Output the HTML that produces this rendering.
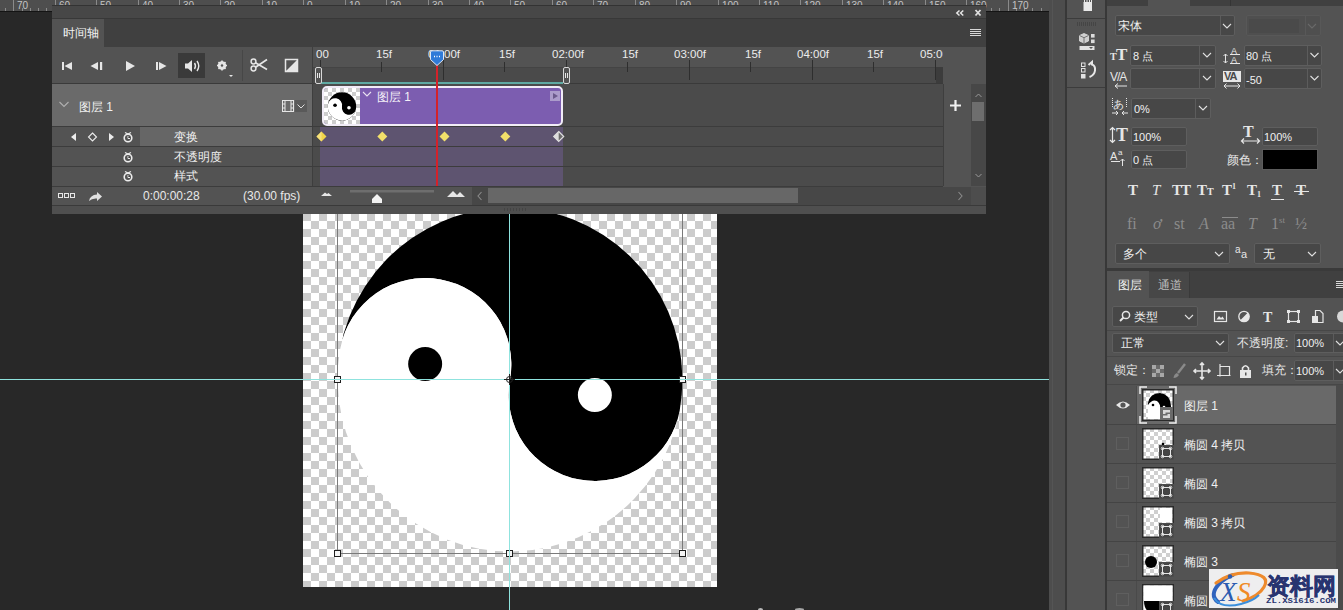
<!DOCTYPE html>
<html><head><meta charset="utf-8">
<style>
*{margin:0;padding:0;box-sizing:border-box;}
html,body{width:1343px;height:610px;overflow:hidden;background:#282828;font-family:"Liberation Sans",sans-serif;color:#e6e6e6;}
.a{position:absolute;}
.t{position:absolute;white-space:nowrap;line-height:1;}
.in{position:absolute;background:#474747;border:1px solid #5e5e5e;border-radius:2px;}
.dv{position:absolute;top:0;bottom:0;width:1px;background:#5c5c5c;}
.ar{position:absolute;}
.sf{font-family:"Liberation Serif",serif;}
</style></head><body>

<!-- ruler -->
<div class="a" id="ruler" style="left:0;top:0;width:1049px;height:11px;background:#4e4e4e;overflow:hidden;"><svg class="a" style="left:0;top:0" width="1049" height="11">
<path d="M5.5 8V11 M13.5 0V11 M22.5 8V11 M30.5 8V11 M38.5 8V11 M46.5 8V11 M55.5 0V11 M63.5 8V11 M71.5 8V11 M80.5 8V11 M88.5 8V11 M96.5 0V11 M104.5 8V11 M113.5 8V11 M121.5 8V11 M129.5 8V11 M138.5 0V11 M146.5 8V11 M154.5 8V11 M162.5 8V11 M171.5 8V11 M179.5 0V11 M187.5 8V11 M196.5 8V11 M204.5 8V11 M212.5 8V11 M220.5 0V11 M229.5 8V11 M237.5 8V11 M245.5 8V11 M254.5 8V11 M262.5 0V11 M270.5 8V11 M278.5 8V11 M287.5 8V11 M295.5 8V11 M303.5 0V11 M312.5 8V11 M320.5 8V11 M328.5 8V11 M336.5 8V11 M345.5 0V11 M353.5 8V11 M361.5 8V11 M370.5 8V11 M378.5 8V11 M386.5 0V11 M394.5 8V11 M403.5 8V11 M411.5 8V11 M419.5 8V11 M428.5 0V11 M436.5 8V11 M444.5 8V11 M452.5 8V11 M461.5 8V11 M469.5 0V11 M477.5 8V11 M486.5 8V11 M494.5 8V11 M502.5 8V11 M510.5 0V11 M519.5 8V11 M527.5 8V11 M535.5 8V11 M544.5 8V11 M552.5 0V11 M560.5 8V11 M568.5 8V11 M577.5 8V11 M585.5 8V11 M593.5 0V11 M602.5 8V11 M610.5 8V11 M618.5 8V11 M626.5 8V11 M635.5 0V11 M643.5 8V11 M651.5 8V11 M660.5 8V11 M668.5 8V11 M676.5 0V11 M684.5 8V11 M693.5 8V11 M701.5 8V11 M709.5 8V11 M718.5 0V11 M726.5 8V11 M734.5 8V11 M742.5 8V11 M751.5 8V11 M759.5 0V11 M767.5 8V11 M776.5 8V11 M784.5 8V11 M792.5 8V11 M800.5 0V11 M809.5 8V11 M817.5 8V11 M825.5 8V11 M834.5 8V11 M842.5 0V11 M850.5 8V11 M858.5 8V11 M867.5 8V11 M875.5 8V11 M883.5 0V11 M892.5 8V11 M900.5 8V11 M908.5 8V11 M916.5 8V11 M925.5 0V11 M933.5 8V11 M941.5 8V11 M950.5 8V11 M958.5 8V11 M966.5 0V11 M974.5 8V11 M983.5 8V11 M991.5 8V11 M999.5 8V11 M1008.5 0V11 M1016.5 8V11 M1024.5 8V11 M1032.5 8V11 M1041.5 8V11" stroke="#8a8a8a" stroke-width="1"/>
<text x="17" y="9" font-family="Liberation Sans" font-size="10" fill="#c4c4c4">70</text>
<text x="59" y="9" font-family="Liberation Sans" font-size="10" fill="#c4c4c4">60</text>
<text x="100" y="9" font-family="Liberation Sans" font-size="10" fill="#c4c4c4">50</text>
<text x="142" y="9" font-family="Liberation Sans" font-size="10" fill="#c4c4c4">40</text>
<text x="183" y="9" font-family="Liberation Sans" font-size="10" fill="#c4c4c4">30</text>
<text x="224" y="9" font-family="Liberation Sans" font-size="10" fill="#c4c4c4">20</text>
<text x="266" y="9" font-family="Liberation Sans" font-size="10" fill="#c4c4c4">10</text>
<text x="307" y="9" font-family="Liberation Sans" font-size="10" fill="#c4c4c4">0</text>
<text x="349" y="9" font-family="Liberation Sans" font-size="10" fill="#c4c4c4">10</text>
<text x="390" y="9" font-family="Liberation Sans" font-size="10" fill="#c4c4c4">20</text>
<text x="432" y="9" font-family="Liberation Sans" font-size="10" fill="#c4c4c4">30</text>
<text x="473" y="9" font-family="Liberation Sans" font-size="10" fill="#c4c4c4">40</text>
<text x="514" y="9" font-family="Liberation Sans" font-size="10" fill="#c4c4c4">50</text>
<text x="556" y="9" font-family="Liberation Sans" font-size="10" fill="#c4c4c4">60</text>
<text x="597" y="9" font-family="Liberation Sans" font-size="10" fill="#c4c4c4">70</text>
<text x="639" y="9" font-family="Liberation Sans" font-size="10" fill="#c4c4c4">80</text>
<text x="680" y="9" font-family="Liberation Sans" font-size="10" fill="#c4c4c4">90</text>
<text x="722" y="9" font-family="Liberation Sans" font-size="10" fill="#c4c4c4">100</text>
<text x="763" y="9" font-family="Liberation Sans" font-size="10" fill="#c4c4c4">110</text>
<text x="804" y="9" font-family="Liberation Sans" font-size="10" fill="#c4c4c4">120</text>
<text x="846" y="9" font-family="Liberation Sans" font-size="10" fill="#c4c4c4">130</text>
<text x="887" y="9" font-family="Liberation Sans" font-size="10" fill="#c4c4c4">140</text>
<text x="929" y="9" font-family="Liberation Sans" font-size="10" fill="#c4c4c4">150</text>
<text x="970" y="9" font-family="Liberation Sans" font-size="10" fill="#c4c4c4">160</text>
<text x="1012" y="9" font-family="Liberation Sans" font-size="10" fill="#c4c4c4">170</text>
</svg></div>
<div class="a" style="left:0;top:11px;width:1049px;height:1px;background:#141414;"></div>

<!-- document canvas -->
<svg class="a" style="left:303px;top:213px;" width="414" height="374" viewBox="303 213 414 374">
  <defs>
    <pattern id="chk" x="303" y="213" width="16" height="16" patternUnits="userSpaceOnUse">
      <rect x="0" y="0" width="16" height="16" fill="#fff"/>
      <rect x="0" y="0" width="8" height="8" fill="#cccccc"/>
      <rect x="8" y="8" width="8" height="8" fill="#cccccc"/>
    </pattern>
  </defs>
  <rect x="303" y="213" width="414" height="374" fill="url(#chk)"/>
  <path fill="#000" d="M340.3 348.55 A172.5 172.5 0 0 1 679.7 410.45 A86.25 86.25 0 0 1 510 379.5 A86.25 86.25 0 0 0 340.3 348.55 Z"/>
  <path id="yin" fill="#fff" d="M340.3 348.55 A172.5 172.5 0 0 0 679.7 410.45 A86.25 86.25 0 0 1 510 379.5 A86.25 86.25 0 0 0 340.3 348.55 Z"/>
  <circle cx="425.15" cy="364.03" r="17" fill="#000"/>
  <circle cx="594.85" cy="394.97" r="17" fill="#fff"/>
  <!-- transform box -->
  <g stroke="#7a7a7a" stroke-width="1" fill="none">
    <path d="M337.5 213 V553.5 H682.5 V213"/>
  </g>
  <g stroke="#1e1e1e" stroke-width="1" fill="#f4f4f4">
    <rect x="334.5" y="376.5" width="6" height="6"/>
    <rect x="679.5" y="376.5" width="6" height="6"/>
    <rect x="334.5" y="550.5" width="6" height="6"/>
    <rect x="506.5" y="550.5" width="6" height="6"/>
    <rect x="679.5" y="550.5" width="6" height="6"/>
  </g>
</svg>

<!-- guides -->
<div class="a" style="left:0;top:379px;width:1049px;height:1px;background:#8fe3de;"></div>
<div class="a" style="left:509px;top:213px;width:1px;height:397px;background:#8fe3de;"></div>
<svg class="a" style="left:503px;top:373px" width="13" height="13"><circle cx="6.5" cy="6.5" r="3" fill="none" stroke="#222" stroke-width="1"/><path d="M6.5 1V12M1 6.5H12" stroke="#222" stroke-width="1"/></svg>

<div class="a" style="left:758px;top:608px;width:5px;height:3px;border-radius:50%;background:#b8b8b8;"></div>
<div class="a" style="left:795px;top:608px;width:9px;height:3px;border-radius:50%;background:#a8a8a8;"></div>
<!-- timeline panel -->
<div class="a" style="left:52px;top:5px;width:934px;height:208px;background:#535353;border-top:1px solid #333;"></div>
<div class="a" style="left:52px;top:6px;width:934px;height:12px;background:#474747;"></div>
<div class="a" style="left:52px;top:18px;width:934px;height:29px;background:#404040;border-top:1px solid #383838;"></div>
<div class="a" style="left:52px;top:19px;width:52px;height:28px;background:#535353;"></div>
<div class="t" style="left:63px;top:27px;font-size:12px;color:#f2f2f2;">时间轴</div>
<!-- << x -->
<svg class="a" style="left:954px;top:8px" width="30" height="9">
 <path d="M5.5 2.5 L2.8 5 L5.5 7.5 M9.3 2.5 L6.6 5 L9.3 7.5" fill="none" stroke="#e6e6e6" stroke-width="1.5"/>
 <path d="M21.5 2 L26.5 7.5 M26.5 2 L21.5 7.5" stroke="#e0e0e0" stroke-width="1.8" fill="none"/>
</svg>
<svg class="a" style="left:970px;top:29px" width="11" height="9">
 <path d="M0 0.5H11M0 2.5H11M0 4.5H11M0 6.5H11" stroke="#d8d8d8" stroke-width="1" fill="none"/>
</svg>

<!-- controls row -->
<svg class="a" style="left:52px;top:47px" width="261" height="37">
 <rect x="126" y="6" width="27" height="25" fill="#3a3a3a"/>
 <rect x="10" y="15" width="2" height="8" fill="#e6e6e6"/><path d="M12.5 19 L20 15 V23 Z" fill="#e6e6e6"/>
 <path d="M38.5 19 L46 15 V23 Z" fill="#e6e6e6"/><rect x="48" y="15" width="2.2" height="8" fill="#e6e6e6"/>
 <path d="M74 14 L83 19 L74 24 Z" fill="#e6e6e6"/>
 <rect x="104" y="15" width="2" height="8" fill="#e6e6e6"/><path d="M107 15 L114.5 19 L107 23 Z" fill="#e6e6e6"/>
 <path d="M133 16.5 H136 L140 13 V25 L136 21.5 H133 Z" fill="#e6e6e6"/>
 <path d="M142.5 16 Q144.5 19 142.5 22 M145 14 Q148.5 19 145 24" stroke="#e6e6e6" stroke-width="1.4" fill="none"/>
 <circle cx="170" cy="18.5" r="3.2" fill="none" stroke="#e6e6e6" stroke-width="2.2"/>
 <path d="M170 13.5V23.5M165 18.5H175M166.5 15L173.5 22M173.5 15L166.5 22" stroke="#e6e6e6" stroke-width="1.6"/>
 <circle cx="170" cy="18.5" r="1.2" fill="#535353"/>
 <path d="M177 28 H181 L179 30 Z" fill="#e6e6e6"/>
 <rect x="190" y="3" width="1" height="31" fill="#474747"/>
 <circle cx="201.5" cy="14.5" r="2.4" fill="none" stroke="#e6e6e6" stroke-width="1.5"/>
 <circle cx="201.5" cy="21.5" r="2.4" fill="none" stroke="#e6e6e6" stroke-width="1.5"/>
 <path d="M203.5 15.8 L215 22.5 M203.5 20.2 L215 12.5" stroke="#e6e6e6" stroke-width="1.7"/>
 <rect x="233.5" y="12.5" width="12" height="12" fill="none" stroke="#e6e6e6" stroke-width="1.5"/>
 <path d="M245 13 L245 24 L234 24 Z" fill="#e6e6e6"/>
</svg>
<div class="a" style="left:52px;top:83px;width:891px;height:1px;background:#3a3a3a;"></div>

<!-- timeline ruler -->
<div class="a" style="left:313px;top:67px;width:630px;height:16px;background:#4a4a4a;border-top:1px solid #444;"></div>
<div class="a" style="left:936px;top:67px;width:7px;height:16px;background:#3c3c3c;"></div>
<div class="a" style="left:312px;top:47px;width:1px;height:159px;background:#3e3e3e;"></div>
<div class="a" style="left:321px;top:82px;width:242px;height:2px;background:#5fa9a2;"></div>
<svg class="a" style="left:313px;top:47px" width="630" height="37">
 <g stroke="#2e2e2e" stroke-width="1">
  <path d="M7.5 13V20 M68.5 15V25 M130.5 13V33 M191.5 15V25 M253.5 13V33 M314.5 15V25 M376.5 13V33 M437.5 15V25 M499.5 13V33 M560.5 15V25 M622.5 13V33"/>
 </g>
 <rect x="2.5" y="20.5" width="6" height="16" rx="1.5" fill="#535353" stroke="#d8d8d8" stroke-width="1"/>
 <path d="M4.5 26V31M6.5 26V31" stroke="#e8e8e8" stroke-width="1"/>
 <rect x="250.5" y="20.5" width="6" height="16" rx="1.5" fill="#535353" stroke="#d8d8d8" stroke-width="1"/>
 <path d="M252.5 26V31M254.5 26V31" stroke="#e8e8e8" stroke-width="1"/>
</svg>
<div class="t" style="left:316px;top:49px;font-size:11.5px;color:#ececec;">00</div>
<div class="t" style="left:376px;top:49px;font-size:11.5px;color:#ececec;">15f</div>
<div class="t" style="left:428px;top:49px;font-size:11.5px;color:#ececec;">01:00f</div>
<div class="t" style="left:499px;top:49px;font-size:11.5px;color:#ececec;">15f</div>
<div class="t" style="left:552px;top:49px;font-size:11.5px;color:#ececec;">02:00f</div>
<div class="t" style="left:622px;top:49px;font-size:11.5px;color:#ececec;">15f</div>
<div class="t" style="left:674px;top:49px;font-size:11.5px;color:#ececec;">03:00f</div>
<div class="t" style="left:745px;top:49px;font-size:11.5px;color:#ececec;">15f</div>
<div class="t" style="left:797px;top:49px;font-size:11.5px;color:#ececec;">04:00f</div>
<div class="t" style="left:867px;top:49px;font-size:11.5px;color:#ececec;">15f</div>
<div class="a" style="left:920px;top:47px;width:23px;height:20px;overflow:hidden;"><div class="t" style="left:0;top:2px;font-size:11.5px;color:#ececec;">05:00f</div></div>

<!-- left layer rows -->
<div class="a" style="left:52px;top:84px;width:260px;height:42px;background:#6a6a6a;"></div>
<svg class="a" style="left:58px;top:101px" width="12" height="8"><path d="M1.5 1 L6 5.5 L10.5 1" stroke="#b0b0b0" stroke-width="1.1" fill="none"/></svg>
<div class="t" style="left:79px;top:101px;font-size:12px;color:#f2f2f2;">图层 1</div>
<svg class="a" style="left:282px;top:99px" width="26" height="14">
 <rect x="0.5" y="1.5" width="11" height="11" fill="none" stroke="#e6e6e6" stroke-width="1"/>
 <path d="M3 2V12M9 2V12M0.5 5H3M0.5 9H3M9 5H11.5M9 9H11.5" stroke="#e6e6e6" stroke-width="1"/>
 <rect x="13" y="1" width="12" height="12" fill="#595959"/>
 <path d="M15.5 5.5L19 9L22.5 5.5" stroke="#dcdcdc" stroke-width="1" fill="none"/>
</svg>
<div class="a" style="left:52px;top:126px;width:891px;height:1px;background:#3c3c3c;"></div>
<div class="a" style="left:52px;top:127px;width:260px;height:19px;background:#535353;"></div>
<div class="a" style="left:140px;top:127px;width:172px;height:19px;background:#666666;"></div>
<div class="a" style="left:52px;top:146px;width:891px;height:1px;background:#3c3c3c;"></div>
<div class="a" style="left:52px;top:166px;width:891px;height:1px;background:#3c3c3c;"></div>
<div class="a" style="left:52px;top:186px;width:891px;height:1px;background:#3c3c3c;"></div>
<svg class="a" style="left:52px;top:127px" width="90" height="60">
 <path d="M19 10 L24 6 V14 Z" fill="#ececec"/>
 <path d="M40.5 6 L44.5 10 L40.5 14 L36.5 10 Z" fill="none" stroke="#ececec" stroke-width="1.1"/>
 <path d="M57 6 V14 L62 10 Z" fill="#ececec"/>
 <g fill="none" stroke="#ececec" stroke-width="1.6"><circle cx="76" cy="11" r="3.8"/><circle cx="76" cy="31" r="3.8"/><circle cx="76" cy="50" r="3.8"/></g>
 <path d="M73 5.5L76 7M79 5.5L76 7 M73 25.5L76 27M79 25.5L76 27 M73 44.5L76 46M79 44.5L76 46" stroke="#ececec" stroke-width="1.2"/>
 <path d="M76 9V11.5H78 M76 29V31.5H78 M76 48V50.5H78" stroke="#ececec" stroke-width="1"/>
</svg>
<div class="t" style="left:174px;top:131px;font-size:12px;color:#f0f0f0;">变换</div>
<div class="t" style="left:174px;top:151px;font-size:12px;color:#f0f0f0;">不透明度</div>
<div class="t" style="left:174px;top:170px;font-size:12px;color:#f0f0f0;">样式</div>

<!-- track area -->
<div class="a" style="left:313px;top:84px;width:630px;height:42px;background:#4b4b4b;"></div>
<div class="a" style="left:313px;top:127px;width:630px;height:19px;background:#4b4b4b;"></div>
<div class="a" style="left:313px;top:147px;width:630px;height:19px;background:#4b4b4b;"></div>
<div class="a" style="left:313px;top:167px;width:630px;height:19px;background:#4b4b4b;"></div>
<div class="a" style="left:320px;top:127px;width:243px;height:19px;background:#5e5470;"></div>
<div class="a" style="left:320px;top:147px;width:243px;height:19px;background:#5e5470;"></div>
<div class="a" style="left:320px;top:167px;width:243px;height:19px;background:#5e5470;"></div>
<!-- clip -->
<div class="a" style="left:322px;top:86px;width:241px;height:40px;background:#7c5db0;border:2px solid #f1ecf7;border-radius:5px;overflow:hidden;">
 <svg class="a" style="left:0;top:0" width="36" height="36" viewBox="0 0 36 36">
  <defs><pattern id="chk2" width="8" height="8" patternUnits="userSpaceOnUse"><rect width="8" height="8" fill="#fff"/><rect width="4" height="4" fill="#cdcdcd"/><rect x="4" y="4" width="4" height="4" fill="#cdcdcd"/></pattern></defs>
  <rect width="36" height="36" fill="url(#chk2)"/>
  <g transform="translate(18,18.5) scale(0.082) translate(-510,-379.5)">
   <circle cx="510" cy="379.5" r="172.5" fill="#000"/>
   <path fill="#fff" d="M340.3 348.55 A172.5 172.5 0 0 0 679.7 410.45 A86.25 86.25 0 0 1 510 379.5 A86.25 86.25 0 0 0 340.3 348.55 Z"/>
   <circle cx="425.15" cy="364.03" r="22" fill="#000"/><circle cx="594.85" cy="394.97" r="22" fill="#fff"/>
  </g>
 </svg>
 <svg class="a" style="left:38px;top:3px" width="10" height="6"><path d="M1 1L5 5L9 1" stroke="#e8e0f0" stroke-width="1.1" fill="none"/></svg>
 <div class="t" style="left:53px;top:3px;font-size:12px;color:#f4f0f8;">图层 1</div>
 <div class="a" style="left:226px;top:3px;width:10px;height:10px;background:#ab9bcb;"></div>
 <svg class="a" style="left:226px;top:3px" width="10" height="10"><path d="M3 2L8 5L3 8Z" fill="#6b5a8c"/></svg>
</div>
<!-- keyframes -->
<svg class="a" style="left:313px;top:127px" width="260" height="20">
 <g transform="translate(8.5,9.5)"><path d="M0 -5L5 0L0 5L-5 0Z" fill="#f2d54a"/><path d="M0 -5L-5 0L0 5Z" fill="#f7e27a"/></g>
 <path d="M69.3 4.5L74.3 9.5L69.3 14.5L64.3 9.5Z" fill="#f2e06a"/>
 <path d="M131.5 4.5L136.5 9.5L131.5 14.5L126.5 9.5Z" fill="#f2e06a"/>
 <path d="M192.3 4.5L197.3 9.5L192.3 14.5L187.3 9.5Z" fill="#f2e06a"/>
 <path d="M245.7 4.5L250.7 9.5L245.7 14.5L240.7 9.5Z" fill="#6a6a6a" stroke="#dedede" stroke-width="1.2"/>
 <path d="M245.7 4.5L240.7 9.5L245.7 14.5Z" fill="#dedede"/>
</svg>
<!-- playhead -->
<div class="a" style="left:436px;top:64px;width:2px;height:122px;background:#d4222a;"></div>
<svg class="a" style="left:429px;top:50px" width="16" height="17">
 <path d="M1.5 2 Q1.5 0.8 3 0.8 H13 Q14.5 0.8 14.5 2 V9.5 L8 15.5 L1.5 9.5 Z" fill="#2f7bd8" stroke="#dfe9f7" stroke-width="1"/>
 <path d="M5 6.5H6M7.5 6.5H8.5M10 6.5H11" stroke="#fff" stroke-width="1.6"/>
</svg>

<!-- bottom bar -->
<div class="a" style="left:52px;top:187px;width:261px;height:18px;background:#535353;"></div>
<svg class="a" style="left:52px;top:187px" width="60" height="18">
 <rect x="6.5" y="6.5" width="4" height="4" fill="none" stroke="#e8e8e8" stroke-width="1"/>
 <rect x="12.5" y="6.5" width="4" height="4" fill="none" stroke="#e8e8e8" stroke-width="1"/>
 <rect x="18.5" y="6.5" width="4" height="4" fill="none" stroke="#e8e8e8" stroke-width="1"/>
 <path d="M37 14 Q38 8 45 7.5 V5 L50 9.5 L45 14 V11.5 Q40 11 37 14Z" fill="#e0e0e0"/>
</svg>
<div class="t" style="left:143px;top:190px;font-size:12px;color:#e8e8e8;">0:00:00:28</div>
<div class="t" style="left:243px;top:190px;font-size:12px;color:#e8e8e8;">(30.00 fps)</div>
<div class="a" style="left:313px;top:187px;width:159px;height:18px;background:#535353;"></div>
<svg class="a" style="left:313px;top:187px" width="159" height="18">
 <path d="M8 9 L12 5.5 L14 7 L15.5 6 L19 9Z" fill="#e6e6e6"/>
 <rect x="37" y="3" width="84" height="2.5" fill="#6e6e6e"/>
 <path d="M59 16 V12 L64 7 L69 12 V16Z" fill="#f2f2f2"/>
 <path d="M134 10 L140 4 L144 8 L147 5 L152 10Z" fill="#e6e6e6"/>
</svg>
<div class="a" style="left:472px;top:187px;width:471px;height:18px;background:#474747;"></div>
<div class="a" style="left:488px;top:188px;width:310px;height:15px;background:#676767;"></div>
<svg class="a" style="left:475px;top:190px" width="10" height="12"><path d="M6.5 2L3 6L6.5 10" stroke="#8a8a8a" stroke-width="1.1" fill="none"/></svg>
<!-- right column -->
<div class="a" style="left:943px;top:84px;width:28px;height:102px;background:#535353;border-left:1px solid #3e3e3e;"></div>
<svg class="a" style="left:949px;top:99px" width="13" height="13"><path d="M6.5 1V12M1 6.5H12" stroke="#f0f0f0" stroke-width="2.2"/></svg>
<div class="a" style="left:971px;top:84px;width:15px;height:102px;background:#474747;"></div>
<div class="a" style="left:972px;top:102px;width:12px;height:19px;background:#6e6e6e;"></div>
<svg class="a" style="left:971px;top:90px" width="15" height="92">
 <path d="M4.5 7L7.5 4L10.5 7" stroke="#9a9a9a" stroke-width="1" fill="none"/>
 <path d="M4.5 84L7.5 87L10.5 84" stroke="#9a9a9a" stroke-width="1" fill="none"/>
</svg>
<div class="a" style="left:943px;top:187px;width:28px;height:18px;background:#474747;"></div>
<div class="a" style="left:971px;top:187px;width:15px;height:18px;background:#4d4d4d;"></div>
<svg class="a" style="left:955px;top:190px" width="10" height="12"><path d="M3.5 2L7 6L3.5 10" stroke="#8a8a8a" stroke-width="1.1" fill="none"/></svg>
<div class="a" style="left:52px;top:205px;width:934px;height:1px;background:#3a3a3a;"></div>
<div class="a" style="left:52px;top:206px;width:934px;height:8px;background:#4f4f4f;"></div>
<svg class="a" style="left:503px;top:207px" width="26" height="5"><path d="M1.5 1V4M4.5 1V4M7.5 1V4M10.5 1V4M13.5 1V4M16.5 1V4M19.5 1V4M22.5 1V4" stroke="#444" stroke-width="1"/></svg>

<!-- right side -->
<div class="a" style="left:1049px;top:0;width:294px;height:610px;background:#535353;"></div>
<div class="a" style="left:1049px;top:0;width:17px;height:610px;background:#4d4d4d;"></div><div class="a" style="left:1052px;top:0;width:1px;height:610px;background:#555;"></div>
<div class="a" style="left:1065px;top:0;width:2px;height:610px;background:#383838;"></div>
<div class="a" style="left:1105px;top:0;width:2px;height:610px;background:#383838;"></div>
<div class="a" style="left:1067px;top:18px;width:38px;height:1px;background:#3c3c3c;"></div>
<div class="a" style="left:1067px;top:87px;width:38px;height:1px;background:#3c3c3c;"></div>
<svg class="a" style="left:1067px;top:0" width="38" height="88">
 <rect x="16.5" y="2" width="8.5" height="9" fill="#e8e8e8"/>
 <path d="M17.5 0V3M20 0V3M22.5 0V3M24.5 0V3" stroke="#e8e8e8" stroke-width="1"/>
 <path d="M10.5 22V26M12.5 22V26M14.5 22V26M16.5 22V26M18.5 22V26M20.5 22V26M22.5 22V26M24.5 22V26M26.5 22V26M28.5 22V26" stroke="#454545" stroke-width="1"/>
 <path d="M17 33.5 L21.5 35.5 V41 L17 43 L12.5 41 V35.5 Z" fill="#cfcfcf" stroke="#e0e0e0" stroke-width="0.8"/>
 <path d="M12.5 35.5 L17 37.7 L21.5 35.5 M17 37.7V43" stroke="#6a6a6a" stroke-width="0.9" fill="none"/>
 <rect x="24" y="34" width="3.6" height="3.6" fill="#dcdcdc"/><rect x="24" y="39.5" width="3.6" height="3.6" fill="#dcdcdc"/>
 <rect x="12.5" y="46" width="15" height="4" fill="#e2e2e2"/><path d="M22 47H26L24 49Z" fill="#555"/>
 <rect x="14.5" y="63" width="3.5" height="3.5" fill="none" stroke="#e2e2e2" stroke-width="1"/>
 <rect x="14.5" y="68.5" width="3.5" height="3.5" fill="none" stroke="#e2e2e2" stroke-width="1"/>
 <rect x="14" y="74" width="4.5" height="4.5" fill="#e2e2e2"/>
 <path d="M21.5 65 L25 62 V64.5 Q28.5 65.5 28 70.5 Q27.5 75 22.5 77" stroke="#e8e8e8" stroke-width="2" fill="none"/>
</svg>

<!-- character panel top tabs (cropped) -->
<div class="a" style="left:1107px;top:0;width:236px;height:6px;background:#404040;"></div>
<div class="a" style="left:1148px;top:0;width:42px;height:6px;background:#535353;"></div>
<div class="a" style="left:1230px;top:0;width:1px;height:6px;background:#353535;"></div>

<!-- character panel -->
<div class="in" style="left:1115px;top:15px;width:120px;height:21px;"><div class="dv" style="left:104px"></div></div>
<div class="t" style="left:1118px;top:20px;font-size:12px;color:#f0f0f0;">宋体</div>
<div class="in" style="left:1246px;top:15px;width:75px;height:21px;background:#4f4f4f;border-color:#585858;"><div class="dv" style="left:58px;background:#585858"></div><div class="a" style="left:2px;top:3px;width:50px;height:14px;background:#4a4a4a;"></div></div>

<!-- size -->
<div class="t sf" style="left:1110px;top:52px;font-size:10px;font-weight:bold;color:#e6e6e6;">T</div>
<div class="t sf" style="left:1116px;top:46px;font-size:17px;font-weight:bold;color:#e6e6e6;">T</div>
<div class="in" style="left:1130px;top:45px;width:86px;height:21px;"><div class="dv" style="left:68px"></div></div>
<div class="t" style="left:1133px;top:51px;font-size:11px;color:#f0f0f0;">8 点</div>
<!-- leading -->
<svg class="a" style="left:1222px;top:45px" width="20" height="20">
 <text x="9" y="9" font-family="Liberation Sans" font-size="9" fill="#e6e6e6">A</text>
 <text x="9" y="18" font-family="Liberation Sans" font-size="9" fill="#e6e6e6">A</text>
 <path d="M8 9.5H18M8 18.5H18" stroke="#e6e6e6" stroke-width="1"/>
 <path d="M3.5 9V18M1.5 11L3.5 9L5.5 11M1.5 16L3.5 18L5.5 16" stroke="#e6e6e6" stroke-width="1" fill="none"/>
</svg>
<div class="in" style="left:1244px;top:45px;width:78px;height:21px;"><div class="dv" style="left:62px"></div></div>
<div class="t" style="left:1246px;top:51px;font-size:11px;color:#f0f0f0;">80 点</div>
<!-- kerning -->
<div class="t" style="left:1110px;top:71px;font-size:12px;color:#e6e6e6;letter-spacing:-1px;">V/A</div>
<svg class="a" style="left:1113px;top:83px" width="16" height="6"><path d="M2 3H14M5 0.5L2 3L5 5.5" stroke="#e6e6e6" stroke-width="1" fill="none"/></svg>
<div class="in" style="left:1130px;top:68px;width:86px;height:21px;"><div class="dv" style="left:68px"></div></div>
<!-- tracking -->
<div class="a" style="left:1223px;top:71px;width:18px;height:11px;background:#e6e6e6;"></div>
<div class="t" style="left:1224px;top:71px;font-size:11px;font-weight:bold;color:#4a4a4a;letter-spacing:-1px;">VA</div>
<svg class="a" style="left:1222px;top:83px" width="20" height="6"><path d="M2 3H18M4.5 0.5L2 3L4.5 5.5M15.5 0.5L18 3L15.5 5.5" stroke="#e6e6e6" stroke-width="1" fill="none"/></svg>
<div class="in" style="left:1244px;top:68px;width:78px;height:21px;"><div class="dv" style="left:62px"></div></div>
<div class="t" style="left:1246px;top:75px;font-size:11px;color:#f0f0f0;">-50</div>
<!-- tsume -->
<div class="t" style="left:1113px;top:99px;font-size:11px;color:#e6e6e6;">あ</div>
<svg class="a" style="left:1111px;top:97px" width="18" height="20">
 <path d="M1.5 1V11M15.5 1V11" stroke="#e6e6e6" stroke-width="1" stroke-dasharray="1 1"/>
 <path d="M1 16H7M5 14L7 16L5 18M17 16H11M13 14L11 16L13 18" stroke="#e6e6e6" stroke-width="1" fill="none"/>
</svg>
<div class="in" style="left:1131px;top:98px;width:80px;height:21px;"><div class="dv" style="left:63px"></div></div>
<div class="t" style="left:1134px;top:104px;font-size:11px;color:#f0f0f0;">0%</div>
<!-- vscale -->
<div class="t sf" style="left:1116px;top:126px;font-size:18px;font-weight:bold;color:#e6e6e6;">T</div>
<svg class="a" style="left:1109px;top:126px" width="8" height="18"><path d="M3.5 1.5V16.5M1 4L3.5 1.5L6 4M1 14L3.5 16.5L6 14" stroke="#e6e6e6" stroke-width="1.2" fill="none"/></svg>
<div class="in" style="left:1131px;top:127px;width:56px;height:19px;"></div>
<div class="t" style="left:1133px;top:132px;font-size:11px;color:#f0f0f0;">100%</div>
<!-- hscale -->
<div class="t sf" style="left:1243px;top:124px;font-size:16px;font-weight:bold;color:#e6e6e6;">T</div>
<svg class="a" style="left:1240px;top:137px" width="21" height="8"><path d="M1.5 4H19.5M4 1.5L1.5 4L4 6.5M17 1.5L19.5 4L17 6.5" stroke="#e6e6e6" stroke-width="1.2" fill="none"/></svg>
<div class="in" style="left:1262px;top:127px;width:56px;height:19px;"></div>
<div class="t" style="left:1264px;top:132px;font-size:11px;color:#f0f0f0;">100%</div>
<!-- baseline -->
<div class="t" style="left:1110px;top:151px;font-size:11px;color:#e6e6e6;">A</div>
<div class="t" style="left:1118px;top:149px;font-size:8px;color:#e6e6e6;">a</div>
<svg class="a" style="left:1110px;top:150px" width="18" height="18"><path d="M1 11.5H10" stroke="#e6e6e6" stroke-width="1"/><path d="M12.5 16V9M10.5 11L12.5 9L14.5 11" stroke="#e6e6e6" stroke-width="1" fill="none"/></svg>
<div class="in" style="left:1131px;top:150px;width:56px;height:19px;"></div>
<div class="t" style="left:1133px;top:155px;font-size:11px;color:#f0f0f0;">0 点</div>
<!-- color -->
<div class="t" style="left:1227px;top:154px;font-size:12px;color:#e6e6e6;">颜色：</div>
<div class="a" style="left:1262px;top:149px;width:56px;height:21px;background:#000;border:1px solid #5c5c5c;"></div>
<!-- style buttons -->
<div class="t sf" style="left:1128px;top:183px;font-size:15px;font-weight:bold;color:#e6e6e6;">T</div>
<div class="t sf" style="left:1152px;top:183px;font-size:15px;font-style:italic;color:#e6e6e6;">T</div>
<div class="t sf" style="left:1172px;top:183px;font-size:15px;font-weight:bold;color:#e6e6e6;letter-spacing:-1px;">TT</div>
<div class="t sf" style="left:1197px;top:183px;font-size:15px;font-weight:bold;color:#e6e6e6;">T<span style="font-size:10px">T</span></div>
<div class="t sf" style="left:1222px;top:183px;font-size:15px;font-weight:bold;color:#e6e6e6;">T<span style="font-size:8px;vertical-align:6px">1</span></div>
<div class="t sf" style="left:1247px;top:183px;font-size:15px;font-weight:bold;color:#e6e6e6;">T<span style="font-size:8px;vertical-align:-2px">1</span></div>
<div class="t sf" style="left:1272px;top:183px;font-size:15px;font-weight:bold;color:#e6e6e6;">T</div>
<div class="a" style="left:1271px;top:199px;width:13px;height:1px;background:#e6e6e6;"></div>
<div class="t sf" style="left:1296px;top:183px;font-size:15px;font-weight:bold;color:#e6e6e6;">T</div>
<div class="a" style="left:1294px;top:191px;width:15px;height:1px;background:#e6e6e6;"></div>
<!-- opentype dim -->
<div class="t sf" style="left:1127px;top:216px;font-size:16px;color:#8c8c8c;">fi</div>
<div class="t sf" style="left:1153px;top:216px;font-size:16px;font-style:italic;color:#8c8c8c;">ơ</div>
<div class="t sf" style="left:1174px;top:216px;font-size:16px;color:#8c8c8c;">st</div>
<div class="t sf" style="left:1199px;top:216px;font-size:16px;font-style:italic;color:#8c8c8c;">A</div>
<div class="t sf" style="left:1221px;top:216px;font-size:16px;color:#8c8c8c;">aa</div>
<div class="a" style="left:1222px;top:217px;width:16px;height:1px;background:#8c8c8c;"></div>
<div class="t sf" style="left:1248px;top:216px;font-size:16px;font-style:italic;color:#8c8c8c;">T</div>
<div class="t sf" style="left:1271px;top:216px;font-size:16px;color:#8c8c8c;">1<span style="font-size:9px;vertical-align:6px">st</span></div>
<div class="t sf" style="left:1295px;top:216px;font-size:16px;color:#8c8c8c;">½</div>
<!-- bottom dropdowns -->
<div class="in" style="left:1115px;top:243px;width:115px;height:21px;"></div>
<div class="t" style="left:1123px;top:248px;font-size:12px;color:#f0f0f0;">多个</div>
<svg class="a" style="left:1214px;top:251px" width="10" height="6"><path d="M1 1L5 5L9 1" stroke="#e0e0e0" stroke-width="1.1" fill="none"/></svg>
<div class="t" style="left:1235px;top:245px;font-size:10px;color:#e6e6e6;">a</div>
<div class="t" style="left:1241px;top:249px;font-size:11px;color:#e6e6e6;">a</div>
<div class="in" style="left:1254px;top:243px;width:67px;height:21px;"></div>
<div class="t" style="left:1263px;top:248px;font-size:12px;color:#f0f0f0;">无</div>
<svg class="a" style="left:1307px;top:251px" width="10" height="6"><path d="M1 1L5 5L9 1" stroke="#e0e0e0" stroke-width="1.1" fill="none"/></svg>
<div class="a" style="left:1107px;top:268px;width:236px;height:3px;background:#3a3a3a;"></div>
<svg class="a" style="left:1107px;top:0" width="236" height="270">
 <g stroke="#e0e0e0" stroke-width="1.1" fill="none">
  <path d="M116 24L120 28L124 24"/>
  <path d="M96 53L100 57L104 53"/><path d="M203.5 53L207.5 57L211.5 53"/>
  <path d="M96 76L100 80L104 76"/><path d="M203.5 76L207.5 80L211.5 76"/>
  <path d="M92 106L96 110L100 106"/>
 </g>
 <path d="M201 24L205 28L209 24" stroke="#6a6a6a" stroke-width="1.1" fill="none"/>
</svg>
<!-- layers panel -->
<div class="a" style="left:1107px;top:271px;width:236px;height:27px;background:#404040;"></div>
<div class="a" style="left:1107px;top:271px;width:42px;height:27px;background:#535353;"></div>
<div class="a" style="left:1149px;top:272px;width:41px;height:26px;background:#474747;border-right:1px solid #3a3a3a;"></div>
<div class="t" style="left:1118px;top:279px;font-size:12px;color:#f0f0f0;">图层</div>
<div class="t" style="left:1158px;top:279px;font-size:12px;color:#bdbdbd;">通道</div>
<svg class="a" style="left:1336px;top:281px" width="7" height="8"><path d="M0 0.5H7M0 2.5H7M0 4.5H7M0 6.5H7" stroke="#d8d8d8" stroke-width="1"/></svg>
<!-- filter row -->
<div class="in" style="left:1112px;top:306px;width:86px;height:21px;"></div>
<svg class="a" style="left:1118px;top:309px" width="14" height="14"><circle cx="8" cy="6" r="3.6" fill="none" stroke="#e6e6e6" stroke-width="1.5"/><path d="M5.5 8.5L2 12" stroke="#e6e6e6" stroke-width="2"/></svg>
<div class="t" style="left:1134px;top:311px;font-size:12px;color:#f0f0f0;">类型</div>
<svg class="a" style="left:1184px;top:314px" width="10" height="6"><path d="M1 1L5 5L9 1" stroke="#e0e0e0" stroke-width="1.1" fill="none"/></svg>
<svg class="a" style="left:1210px;top:306px" width="133" height="22">
 <rect x="4.5" y="5.5" width="12" height="10" fill="none" stroke="#e6e6e6" stroke-width="1.2"/>
 <path d="M6.5 13.5L9 10L11 12L12.5 10.5L14.5 13.5Z" fill="#e6e6e6"/>
 <circle cx="34" cy="10.5" r="5.2" fill="none" stroke="#e6e6e6" stroke-width="1.3"/>
 <path d="M30.3 14.2 A5.2 5.2 0 0 0 37.7 6.8Z" fill="#e6e6e6"/>
 <text x="53" y="16" font-family="Liberation Serif" font-weight="bold" font-size="14" fill="#e6e6e6">T</text>
 <rect x="78.5" y="5.5" width="10" height="10" fill="none" stroke="#e6e6e6" stroke-width="1.2"/>
 <g fill="#e6e6e6"><rect x="77" y="4" width="3" height="3"/><rect x="87" y="4" width="3" height="3"/><rect x="77" y="14" width="3" height="3"/><rect x="87" y="14" width="3" height="3"/></g>
 <path d="M105.5 4.5H110L113 7.5V16.5H105.5Z" fill="none" stroke="#e6e6e6" stroke-width="1.2"/>
 <rect x="102" y="10" width="6" height="7" fill="#e6e6e6"/>
 <circle cx="133" cy="10.5" r="6" fill="#d8d8d8"/>
</svg>
<div class="a" style="left:1107px;top:330px;width:236px;height:1px;background:#474747;"></div>
<!-- blend row -->
<div class="in" style="left:1112px;top:333px;width:117px;height:20px;"></div>
<div class="t" style="left:1121px;top:337px;font-size:12px;color:#f0f0f0;">正常</div>
<svg class="a" style="left:1215px;top:340px" width="10" height="6"><path d="M1 1L5 5L9 1" stroke="#e0e0e0" stroke-width="1.1" fill="none"/></svg>
<div class="t" style="left:1237px;top:337px;font-size:12px;color:#e6e6e6;">不透明度:</div>
<div class="in" style="left:1294px;top:333px;width:60px;height:20px;"><div class="dv" style="left:38px"></div></div>
<div class="t" style="left:1296px;top:338px;font-size:11px;color:#f0f0f0;">100%</div>
<svg class="a" style="left:1335px;top:340px" width="8" height="6"><path d="M1 1L5 5L9 1" stroke="#e0e0e0" stroke-width="1.1" fill="none"/></svg>
<div class="a" style="left:1107px;top:356px;width:236px;height:1px;background:#474747;"></div>
<!-- lock row -->
<div class="t" style="left:1114px;top:364px;font-size:12px;color:#e6e6e6;">锁定：</div>
<svg class="a" style="left:1150px;top:361px" width="105" height="20">
 <g fill="#a8a8a8"><rect x="2" y="4" width="12" height="12" fill="#6a6a6a"/><rect x="2" y="4" width="4" height="4"/><rect x="10" y="4" width="4" height="4"/><rect x="6" y="8" width="4" height="4"/><rect x="2" y="12" width="4" height="4"/><rect x="10" y="12" width="4" height="4"/></g>
 <path d="M35 3L28 12" stroke="#8a8a8a" stroke-width="2.4"/><path d="M27 12Q24 13 23.5 17Q27 17 29 14Z" fill="#8a8a8a"/>
 <path d="M52 2V18M44 10H60M50 4L52 2L54 4M50 16L52 18L54 16M46 8L44 10L46 12M58 8L60 10L58 12" stroke="#e6e6e6" stroke-width="1.6" fill="none"/>
 <path d="M70 5.5H79.5V15M67 14.5H80.5M70 3V15.5M79.5 3" stroke="#e6e6e6" stroke-width="1.2" fill="none"/>
 <rect x="90" y="9" width="11" height="8" fill="#e6e6e6"/><path d="M92.5 9.5V7Q95.5 2.5 98.5 7V9.5" stroke="#e6e6e6" stroke-width="1.6" fill="none"/><rect x="95" y="11.5" width="1.5" height="3" fill="#535353"/>
</svg>
<div class="t" style="left:1262px;top:364px;font-size:12px;color:#e6e6e6;">填充：</div>
<div class="in" style="left:1294px;top:360px;width:60px;height:21px;"><div class="dv" style="left:38px"></div></div>
<div class="t" style="left:1296px;top:366px;font-size:11px;color:#f0f0f0;">100%</div>
<svg class="a" style="left:1335px;top:368px" width="8" height="6"><path d="M1 1L5 5L9 1" stroke="#e0e0e0" stroke-width="1.1" fill="none"/></svg>
<div class="a" style="left:1107px;top:384px;width:236px;height:1px;background:#474747;"></div>
<!-- layer list -->
<div class="a" style="left:1336px;top:385px;width:7px;height:225px;background:#4b4b4b;"></div>
<div class="a" style="left:1137px;top:386px;width:199px;height:38px;background:#696969;"></div>
<svg width="0" height="0" style="position:absolute"><defs>
 <pattern id="chk3" x="1143" y="0" width="8" height="8" patternUnits="userSpaceOnUse"><rect width="8" height="8" fill="#fff"/><rect width="4" height="4" fill="#cfcfcf"/><rect x="4" y="4" width="4" height="4" fill="#cfcfcf"/></pattern>
</defs></svg>

<div class="a" style="left:1136px;top:386px;width:1px;height:38px;background:#4a4a4a;"></div>
<svg class="a" style="left:1115px;top:400px" width="16" height="10"><path d="M1 5Q8 -2 15 5Q8 12 1 5Z" fill="#e8e8e8"/><circle cx="8" cy="5" r="2.6" fill="#555"/></svg>
<svg class="a" style="left:1142px;top:389px" width="32" height="32" viewBox="0 0 32 32"><defs><pattern id="pc0" width="8" height="8" patternUnits="userSpaceOnUse"><rect width="8" height="8" fill="#fff"/><rect width="4" height="4" fill="#cfcfcf"/><rect x="4" y="4" width="4" height="4" fill="#cfcfcf"/></pattern></defs><rect x="0" y="0" width="32" height="32" fill="#2a2a2a"/><rect x="1.5" y="1.5" width="29" height="29" fill="url(#pc0)"/><path d="M6 30 V14 Q8 4 18 4 Q28 5 29 17 L29 21 L18 21 L18 30Z" fill="#000"/><path d="M6 30 V16 Q10 10 15 12 Q19 15 18 21 V30Z" fill="#fff"/><circle cx="11" cy="16" r="1.3" fill="#000"/><circle cx="22" cy="18" r="1.3" fill="#fff"/><rect x="18" y="18" width="13" height="13" fill="#6a6a6a"/><path d="M21 21H28V23.5H23.5V25H28V29H21V26.5H25.5V25H21Z" fill="#d8d8d8"/></svg>
<svg class="a" style="left:1139px;top:386px" width="38" height="38"><path d="M1 8V1H8M30 1H37V8M37 30V37H30M8 37H1V30" stroke="#f0f0f0" stroke-width="1.5" fill="none"/></svg>
<div class="t" style="left:1184px;top:400px;font-size:12px;color:#f0f0f0;">图层 1</div>
<div class="a" style="left:1107px;top:424px;width:229px;height:1px;background:#444;"></div>
<div class="a" style="left:1136px;top:425px;width:1px;height:38px;background:#4a4a4a;"></div>
<div class="a" style="left:1116px;top:437px;width:13px;height:13px;border:1px solid #5f5f5f;"></div>
<svg class="a" style="left:1142px;top:428px" width="32" height="32" viewBox="0 0 32 32"><defs><pattern id="pc1" width="8" height="8" patternUnits="userSpaceOnUse"><rect width="8" height="8" fill="#fff"/><rect width="4" height="4" fill="#cfcfcf"/><rect x="4" y="4" width="4" height="4" fill="#cfcfcf"/></pattern></defs><rect x="0" y="0" width="32" height="32" fill="#2a2a2a"/><rect x="1.5" y="1.5" width="29" height="29" fill="url(#pc1)"/><circle cx="21" cy="16" r="1.3" fill="#000"/><rect x="17" y="17" width="15" height="15" fill="#535353"/><rect x="17.5" y="17.5" width="14" height="14" fill="#2a2a2a" opacity="0.35"/><rect x="20.5" y="20.5" width="8" height="8" fill="none" stroke="#e6e6e6" stroke-width="1"/><g fill="none" stroke="#e6e6e6" stroke-width="1"><circle cx="20.5" cy="20.5" r="1.3"/><circle cx="28.5" cy="20.5" r="1.3"/><circle cx="20.5" cy="28.5" r="1.3"/><circle cx="28.5" cy="28.5" r="1.3"/></g></svg>
<div class="t" style="left:1184px;top:439px;font-size:12px;color:#f0f0f0;">椭圆 4 拷贝</div>
<div class="a" style="left:1107px;top:463px;width:229px;height:1px;background:#444;"></div>
<div class="a" style="left:1136px;top:464px;width:1px;height:38px;background:#4a4a4a;"></div>
<div class="a" style="left:1116px;top:476px;width:13px;height:13px;border:1px solid #5f5f5f;"></div>
<svg class="a" style="left:1142px;top:467px" width="32" height="32" viewBox="0 0 32 32"><defs><pattern id="pc2" width="8" height="8" patternUnits="userSpaceOnUse"><rect width="8" height="8" fill="#fff"/><rect width="4" height="4" fill="#cfcfcf"/><rect x="4" y="4" width="4" height="4" fill="#cfcfcf"/></pattern></defs><rect x="0" y="0" width="32" height="32" fill="#2a2a2a"/><rect x="1.5" y="1.5" width="29" height="29" fill="url(#pc2)"/><rect x="17" y="17" width="15" height="15" fill="#535353"/><rect x="17.5" y="17.5" width="14" height="14" fill="#2a2a2a" opacity="0.35"/><rect x="20.5" y="20.5" width="8" height="8" fill="none" stroke="#e6e6e6" stroke-width="1"/><g fill="none" stroke="#e6e6e6" stroke-width="1"><circle cx="20.5" cy="20.5" r="1.3"/><circle cx="28.5" cy="20.5" r="1.3"/><circle cx="20.5" cy="28.5" r="1.3"/><circle cx="28.5" cy="28.5" r="1.3"/></g></svg>
<div class="t" style="left:1184px;top:478px;font-size:12px;color:#f0f0f0;">椭圆 4</div>
<div class="a" style="left:1107px;top:502px;width:229px;height:1px;background:#444;"></div>
<div class="a" style="left:1136px;top:503px;width:1px;height:38px;background:#4a4a4a;"></div>
<div class="a" style="left:1116px;top:515px;width:13px;height:13px;border:1px solid #5f5f5f;"></div>
<svg class="a" style="left:1142px;top:506px" width="32" height="32" viewBox="0 0 32 32"><defs><pattern id="pc3" width="8" height="8" patternUnits="userSpaceOnUse"><rect width="8" height="8" fill="#fff"/><rect width="4" height="4" fill="#cfcfcf"/><rect x="4" y="4" width="4" height="4" fill="#cfcfcf"/></pattern></defs><rect x="0" y="0" width="32" height="32" fill="#2a2a2a"/><rect x="1.5" y="1.5" width="29" height="29" fill="url(#pc3)"/><rect x="18" y="2" width="12" height="14" fill="#fff"/><rect x="17" y="17" width="15" height="15" fill="#535353"/><rect x="17.5" y="17.5" width="14" height="14" fill="#2a2a2a" opacity="0.35"/><rect x="20.5" y="20.5" width="8" height="8" fill="none" stroke="#e6e6e6" stroke-width="1"/><g fill="none" stroke="#e6e6e6" stroke-width="1"><circle cx="20.5" cy="20.5" r="1.3"/><circle cx="28.5" cy="20.5" r="1.3"/><circle cx="20.5" cy="28.5" r="1.3"/><circle cx="28.5" cy="28.5" r="1.3"/></g></svg>
<div class="t" style="left:1184px;top:517px;font-size:12px;color:#f0f0f0;">椭圆 3 拷贝</div>
<div class="a" style="left:1107px;top:541px;width:229px;height:1px;background:#444;"></div>
<div class="a" style="left:1136px;top:542px;width:1px;height:38px;background:#4a4a4a;"></div>
<div class="a" style="left:1116px;top:554px;width:13px;height:13px;border:1px solid #5f5f5f;"></div>
<svg class="a" style="left:1142px;top:545px" width="32" height="32" viewBox="0 0 32 32"><defs><pattern id="pc4" width="8" height="8" patternUnits="userSpaceOnUse"><rect width="8" height="8" fill="#fff"/><rect width="4" height="4" fill="#cfcfcf"/><rect x="4" y="4" width="4" height="4" fill="#cfcfcf"/></pattern></defs><rect x="0" y="0" width="32" height="32" fill="#2a2a2a"/><rect x="1.5" y="1.5" width="29" height="29" fill="url(#pc4)"/><circle cx="9" cy="17" r="6" fill="#000"/><rect x="17" y="17" width="15" height="15" fill="#535353"/><rect x="17.5" y="17.5" width="14" height="14" fill="#2a2a2a" opacity="0.35"/><rect x="20.5" y="20.5" width="8" height="8" fill="none" stroke="#e6e6e6" stroke-width="1"/><g fill="none" stroke="#e6e6e6" stroke-width="1"><circle cx="20.5" cy="20.5" r="1.3"/><circle cx="28.5" cy="20.5" r="1.3"/><circle cx="20.5" cy="28.5" r="1.3"/><circle cx="28.5" cy="28.5" r="1.3"/></g></svg>
<div class="t" style="left:1184px;top:556px;font-size:12px;color:#f0f0f0;">椭圆 3</div>
<div class="a" style="left:1107px;top:580px;width:229px;height:1px;background:#444;"></div>
<div class="a" style="left:1136px;top:581px;width:1px;height:38px;background:#4a4a4a;"></div>
<div class="a" style="left:1116px;top:593px;width:13px;height:13px;border:1px solid #5f5f5f;"></div>
<svg class="a" style="left:1142px;top:584px" width="32" height="32" viewBox="0 0 32 32"><defs><pattern id="pc5" width="8" height="8" patternUnits="userSpaceOnUse"><rect width="8" height="8" fill="#fff"/><rect width="4" height="4" fill="#cfcfcf"/><rect x="4" y="4" width="4" height="4" fill="#cfcfcf"/></pattern></defs><rect x="0" y="0" width="32" height="32" fill="#2a2a2a"/><rect x="1.5" y="1.5" width="29" height="29" fill="url(#pc5)"/><rect x="1.5" y="1.5" width="29" height="29" fill="#fff"/><path d="M2 17 H30 Q30 30 16 31 Q2 30 2 17Z" fill="#000"/><rect x="17" y="17" width="15" height="15" fill="#535353"/><rect x="17.5" y="17.5" width="14" height="14" fill="#2a2a2a" opacity="0.35"/><rect x="20.5" y="20.5" width="8" height="8" fill="none" stroke="#e6e6e6" stroke-width="1"/><g fill="none" stroke="#e6e6e6" stroke-width="1"><circle cx="20.5" cy="20.5" r="1.3"/><circle cx="28.5" cy="20.5" r="1.3"/><circle cx="20.5" cy="28.5" r="1.3"/><circle cx="28.5" cy="28.5" r="1.3"/></g></svg>
<div class="t" style="left:1184px;top:595px;font-size:12px;color:#f0f0f0;">椭圆</div>
<!-- watermark -->
<div class="a" style="left:1209px;top:569px;width:129px;height:39px;background:#eeeeef;"></div>
<svg class="a" style="left:1209px;top:569px" width="129" height="39">
 <path d="M9 33 Q0 26 10 15 Q16 9 24 6" stroke="#2f62bd" stroke-width="4" fill="none" stroke-linecap="round"/>
 <path d="M7 14 Q22 3 40 4 Q62 6 55 18 Q50 27 34 32" stroke="#ee8a2c" stroke-width="3.2" fill="none" stroke-linecap="round"/>
 <path d="M5 29 Q12 40 32 35 Q44 32 50 26" stroke="#3b8fdc" stroke-width="2" fill="none"/>
 <circle cx="21" cy="7.5" r="2.2" fill="#2b5bb0"/>
 <text x="11" y="32" font-family="Liberation Serif" font-style="italic" font-size="27" fill="#2b5bb0">X</text>
 <text x="28" y="32" font-family="Liberation Serif" font-style="italic" font-size="27" fill="#f08a24">S</text>
 <text x="58" y="25" font-family="Liberation Sans" font-weight="bold" font-size="23" fill="#283470" stroke="#283470" stroke-width="0.6" textLength="69" lengthAdjust="spacingAndGlyphs">资料网</text>
 <text x="57" y="34" font-family="Liberation Mono" font-weight="bold" font-size="8" fill="#283470" textLength="70" lengthAdjust="spacingAndGlyphs">ZL.XS1616.COM</text>
</svg>



</body></html>
